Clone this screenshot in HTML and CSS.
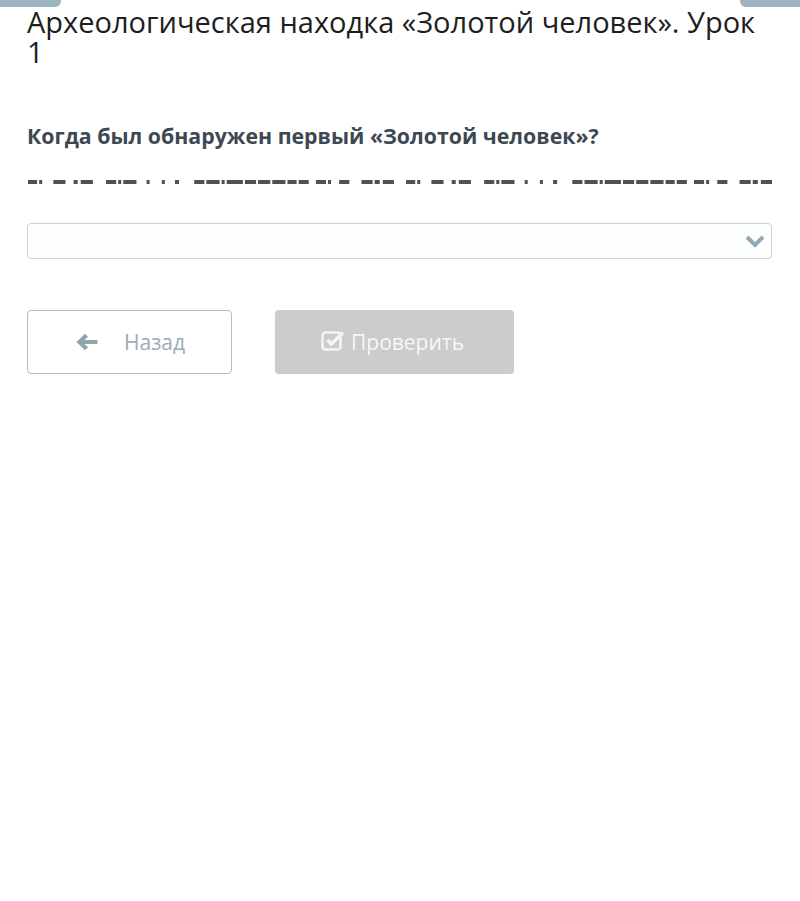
FILE: index.html
```html
<!DOCTYPE html>
<html lang="ru">
  <head>
    <meta charset="utf-8">
    <title>Золотой человек. Урок 1</title>
    <link rel="stylesheet" href="styles.css">
  </head>
<body>
  <div class="top-tabs">
    <div class="tab tab-left"></div>
    <div class="tab tab-right"></div>
  </div>

  <div class="page">
    <h1 class="title">Археологическая находка «Золотой человек». Урок 1</h1>

    <!-- question -->
    <div class="question">Когда был обнаружен первый «Золотой человек»?</div>

    <!-- clipped line of answer text, only the bottom slice is visible -->
    <svg class="cut-line" width="744" height="4" viewBox="0 0 734 4" preserveAspectRatio="none">
      <defs>
        <g id="cut">
          <rect x="0" y="0" width="9" height="4"/>
          <rect x="11" y="0" width="3" height="4"/>
          <rect x="25" y="0" width="12" height="4"/>
          <rect x="45" y="0" width="4" height="4"/>
          <rect x="52" y="0" width="12" height="4"/>
          <rect x="77" y="0" width="10" height="4"/>
          <rect x="89" y="0" width="3" height="4"/>
          <rect x="94" y="0" width="13" height="4"/>
          <rect x="117" y="0" width="3" height="4"/>
          <rect x="132" y="0" width="3" height="4"/>
          <rect x="145" y="0" width="4" height="4"/>
          <rect x="164" y="0" width="10" height="4"/>
          <rect x="176" y="0" width="13" height="4"/>
          <rect x="191" y="0" width="3" height="4"/>
          <rect x="196" y="0" width="16" height="4"/>
          <rect x="214" y="0" width="11" height="4"/>
          <rect x="227" y="0" width="12" height="4"/>
          <rect x="241" y="0" width="13" height="4"/>
          <rect x="256" y="0" width="9" height="4"/>
          <rect x="267" y="0" width="10" height="4"/>
          <rect x="284" y="0" width="10" height="4"/>
          <rect x="296" y="0" width="3" height="4"/>
          <rect x="307" y="0" width="10" height="4"/>
          <rect x="329" y="0" width="11" height="4"/>
          <rect x="342" y="0" width="5" height="4"/>
          <rect x="350" y="0" width="11" height="4"/>
        </g>
      </defs>
      <use href="#cut" x="0" fill="#4b5259"/>
      <use href="#cut" x="373" fill="#4b5259"/>
    </svg>

    <div class="answer-select">
      <svg class="chevron" width="20" height="14" viewBox="0 0 20 14">
        <path d="M2 3 L10 11 L18 3" fill="none" stroke="#8faab5" stroke-width="4" stroke-linejoin="miter"/>
      </svg>
    </div>

    <div class="actions">
      <div class="btn btn-back">
        <svg width="22" height="18" viewBox="0 0 22 18">
          <path d="M0.5 9 L9 0.8 L12 3.8 L8.5 7 L21.5 7 L21.5 11 L8.5 11 L12 14.2 L9 17.2 Z" fill="#8fa6ae"/>
        </svg>
        <span class="btn-label">Назад</span>
      </div>
      <div class="btn btn-check">
        <svg width="24" height="22" viewBox="0 0 24 22">
          <rect x="1.5" y="3.5" width="18" height="17" rx="3" fill="none" stroke="#f4f4f4" stroke-width="2.6"/>
          <path d="M6.5 11 L10.5 15 L22 3.5" fill="none" stroke="#f4f4f4" stroke-width="3.6"/>
        </svg>
        <span>Проверить</span>
      </div>
    </div>
  </div>
</body>
</html>
```

FILE: styles.css
```css
* {
  box-sizing: border-box;
}
body {
  margin: 0;
  background: #ffffff;
  font-family: "Open Sans", "Noto Sans", sans-serif;
}
.top-tabs {
  display: flex;
  justify-content: space-between;
  height: 7px;
}
.tab {
  width: 61px;
  height: 7px;
  background: #9fb4c1;
}
.tab-left {
  border-bottom-right-radius: 6px;
}
.tab-right {
  width: 60px;
  border-bottom-left-radius: 6px;
}
.page {
  padding: 0 28px 0 27px;
}
.title {
  margin: 0;
  font-size: 29px;
  font-weight: 400;
  line-height: 30px;
  color: #1e1e1e;
}
.question {
  margin-top: 56px;
  font-size: 21.3px;
  font-weight: 700;
  line-height: 26px;
  color: #3d4852;
}
.cut-line {
  display: block;
  margin-top: 31px;
  margin-left: 1px;
}
.answer-select {
  margin-top: 39px;
  height: 36px;
  border: 1px solid #c8d3d8;
  border-radius: 4px;
  background: #fdfefe;
  display: flex;
  align-items: center;
  justify-content: flex-end;
  padding-right: 6px;
}
.actions {
  display: flex;
  gap: 43px;
  margin-top: 51px;
}
.btn {
  height: 64px;
  border-radius: 4px;
  display: flex;
  align-items: center;
  font-size: 21px;
}
.btn-back {
  width: 205px;
  border: 1px solid #a9bfc7;
  padding-left: 48px;
  color: #98adb5;
}
.btn-back .btn-label {
  margin-left: 26px;
}
.btn-check {
  width: 239px;
  background: #cccccc;
  color: #f6f6f6;
  padding-left: 46px;
}
.btn-check svg {
  margin-right: 6px;
  margin-top: -5px;
}
```
